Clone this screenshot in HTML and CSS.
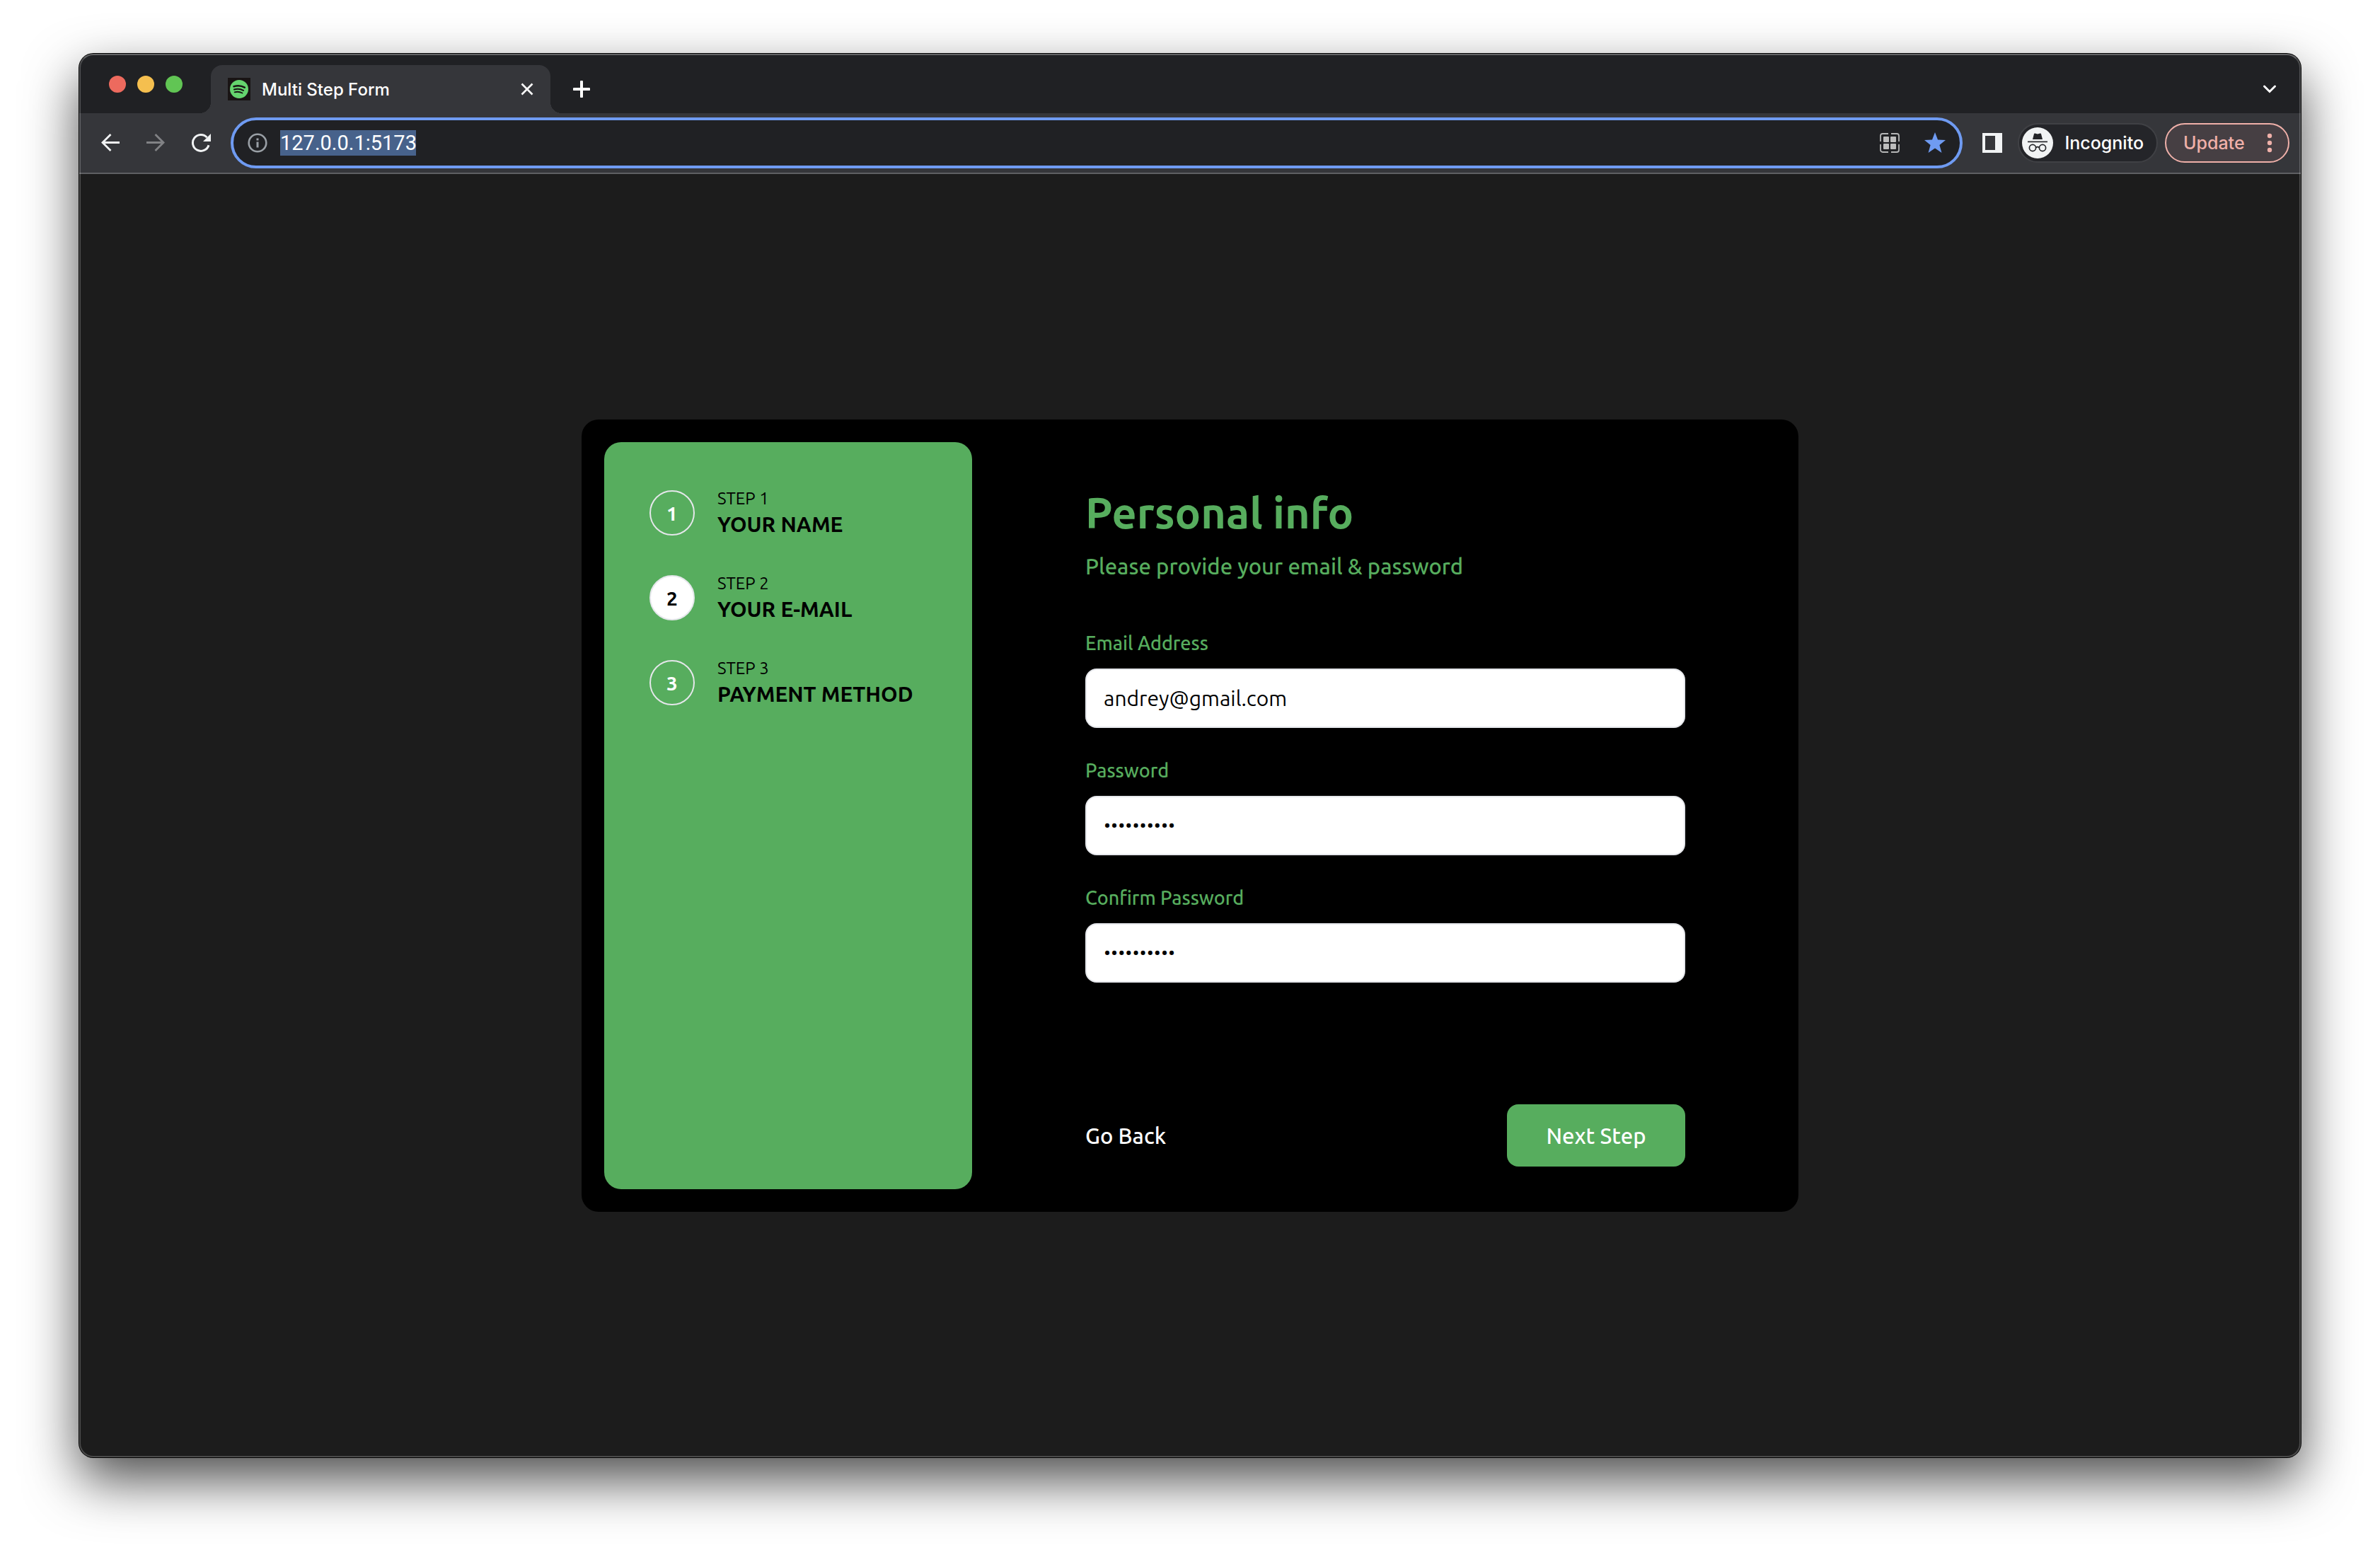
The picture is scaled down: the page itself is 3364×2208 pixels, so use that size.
FILE: index.html
```html
<!DOCTYPE html>
<html lang="en">
<head>
<meta charset="utf-8">
<title>Multi Step Form</title>
<link rel="stylesheet" href="styles.css">
</head>
<body>
<div class="window">
  <header class="tabstrip">
    <div class="lights">
      <button class="light light-close" type="button" aria-label="Close window"></button>
      <button class="light light-min" type="button" aria-label="Minimise window"></button>
      <button class="light light-max" type="button" aria-label="Zoom window"></button>
    </div>
    <div class="tab">
      <svg class="favicon" viewBox="0 0 32 32" aria-hidden="true">
        <rect width="32" height="32" fill="#191414"/>
        <circle cx="16" cy="16" r="13" fill="#65d46e"/>
        <g fill="none" stroke="#191414" stroke-linecap="round">
          <path d="M8.5 12.2c5-1.5 11-1 15.300 1.400" stroke-width="2.500"/>
          <path d="M9 16.400c4.500-1.200 9.300-.7 13 1.400" stroke-width="2.100"/>
          <path d="M9.600 20.300c3.800-1 7.700-.5 10.900 1.200" stroke-width="1.800"/>
        </g>
      </svg>
      <span class="tab-title">Multi Step Form</span>
      <button class="icon-btn" type="button" aria-label="Close tab">
        <svg width="18" height="18" viewBox="0 0 18 18"><path d="M1.500 1.500l15 15M16.500 1.500l-15 15" stroke="#fff" stroke-width="2.600"/></svg>
      </button>
    </div>
    <button class="icon-btn new-tab" type="button" aria-label="New tab">
      <svg width="24" height="24" viewBox="0 0 24 24"><path d="M12 1.500v21M1.500 12h21" stroke="#fff" stroke-width="4" stroke-linecap="round"/></svg>
    </button>
    <button class="icon-btn tab-search" type="button" aria-label="Search tabs">
      <svg width="20" height="14" viewBox="0 0 20 14"><path d="M2.500 3L10 10.500 17.500 3" fill="none" stroke="#fff" stroke-width="3" stroke-linecap="round"/></svg>
    </button>
  </header>

  <nav class="toolbar" aria-label="Browser">
    <div class="nav-buttons">
      <button class="icon-btn" type="button" aria-label="Back">
        <svg width="28" height="28" viewBox="0 0 28 28"><path d="M27 13.500H3M14.500 2L3 13.500 14.500 25" fill="none" stroke="#f1f3f4" stroke-width="2.800"/></svg>
      </button>
      <button class="icon-btn" type="button" aria-label="Forward">
        <svg width="28" height="28" viewBox="0 0 28 28"><path d="M1 13.500h24M13.500 2L25 13.500 13.500 25" fill="none" stroke="#818285" stroke-width="2.800"/></svg>
      </button>
      <button class="icon-btn" type="button" aria-label="Reload">
        <svg width="28" height="28" viewBox="0 0 28 28"><path d="M22.500 6.200A11.500 11.500 0 1 0 25 17.200" fill="none" stroke="#f1f3f4" stroke-width="3"/><path d="M28 1v11H17z" fill="#f1f3f4"/></svg>
      </button>
    </div>
    <div class="omnibox">
      <svg width="28" height="28" viewBox="0 0 28 28" aria-hidden="true"><circle cx="14" cy="14" r="12.300" fill="none" stroke="#9aa0a6" stroke-width="2.600"/><path d="M12.500 7.500h3v3h-3zM12.500 12.500h3v8h-3z" fill="#9aa0a6"/></svg>
      <input class="url" type="text" value="127.0.0.1:5173" aria-label="Address">
      <div class="omnibox-actions">
        <button class="icon-btn" type="button" aria-label="QR code">
          <svg width="28" height="28" viewBox="0 0 28 28"><g fill="#bdbdbd"><rect x="5" y="5" width="8" height="8" rx="1"/><rect x="15" y="5" width="8" height="8" rx="1"/><rect x="5" y="15" width="8" height="8" rx="1"/><rect x="15" y="15" width="8" height="8" rx="1"/></g><path d="M1 12V4a3 3 0 0 1 3-3h8M16 1h8a3 3 0 0 1 3 3v8M27 16v8a3 3 0 0 1-3 3h-8M12 27H4a3 3 0 0 1-3-3v-8" fill="none" stroke="#b4b5b6" stroke-width="1.800"/></svg>
        </button>
        <button class="icon-btn" type="button" aria-label="Bookmark">
          <svg width="30" height="30" viewBox="0 0 30 30"><path d="M15 0l4 10.500 11 .5-8.600 7L24.500 29 15 22.600 5.500 29l3.100-11L0 11l11-.5z" fill="#6f9bf2"/></svg>
        </button>
      </div>
    </div>
    <button class="icon-btn" type="button" aria-label="Side panel">
      <svg width="28" height="28" viewBox="0 0 28 28"><path d="M0 0h28v28H0zM4 4v20h14V4z" fill="#f1f3f4" fill-rule="evenodd"/></svg>
    </button>
    <div class="profile">
      <svg width="44" height="44" viewBox="0 0 44 44" aria-hidden="true">
        <circle cx="22" cy="22" r="22" fill="#f1f3f4"/>
        <path d="M17 9.300q.3-1 1.300-.8l3.700.9 3.700-.9q1-.2 1.300.8L29 17H15z" fill="#242529"/>
        <path d="M8 20.400h28" stroke="#242529" stroke-width="1.700"/>
        <g fill="none" stroke="#242529" stroke-width="1.700"><circle cx="15" cy="29" r="4.600"/><circle cx="29" cy="29" r="4.600"/><path d="M19.600 28.500q2.400-1.600 4.800 0"/></g>
      </svg>
      <span>Incognito</span>
    </div>
    <button class="update" type="button">
      <span>Update</span>
      <svg width="8" height="28" viewBox="0 0 8 28" aria-hidden="true"><g fill="#efb0a9"><circle cx="4" cy="4" r="3.200"/><circle cx="4" cy="14" r="3.200"/><circle cx="4" cy="24" r="3.200"/></g></svg>
    </button>
  </nav>

  <main class="page">
    <section class="card">
      <ol class="steps">
        <li class="step">
          <span class="step-num">1</span>
          <span class="step-text"><span class="step-label">STEP 1</span><strong class="step-name">YOUR NAME</strong></span>
        </li>
        <li class="step" aria-current="step">
          <span class="step-num step-num-active">2</span>
          <span class="step-text"><span class="step-label">STEP 2</span><strong class="step-name">YOUR E-MAIL</strong></span>
        </li>
        <li class="step">
          <span class="step-num">3</span>
          <span class="step-text"><span class="step-label">STEP 3</span><strong class="step-name">PAYMENT METHOD</strong></span>
        </li>
      </ol>
      <form class="form">
        <h1 class="title">Personal info</h1>
        <p class="subtitle">Please provide your email &amp; password</p>
        <div class="fields">
          <div class="field">
            <label for="email">Email Address</label>
            <input id="email" type="email" value="andrey@gmail.com">
          </div>
          <div class="field">
            <label for="password">Password</label>
            <input id="password" class="secret" type="password" value="qwerty1234">
          </div>
          <div class="field">
            <label for="confirm">Confirm Password</label>
            <input id="confirm" class="secret" type="password" value="qwerty1234">
          </div>
        </div>
        <div class="actions">
          <button class="back" type="button">Go Back</button>
          <button class="next" type="submit">Next Step</button>
        </div>
      </form>
    </section>
  </main>
</div>
</body>
</html>
```
FILE: styles.css
```css
:root {
  --green: #57ad5e;
  --strip: #202124;
  --bar: #35363a;
  --page: #1c1c1c;
  --ui: Inter, "Liberation Sans", sans-serif;
  --form: Ubuntu, Lato, "Noto Sans", sans-serif;
}

* { box-sizing: border-box; }

body {
  margin: 0;
  min-height: 100vh;
  padding: 76px 112px 148px;
  display: flex;
  background: #fff;
  font-family: var(--ui);
}

button, input { font: inherit; color: inherit; margin: 0; }
button { border: 0; padding: 0; background: none; cursor: pointer; }
svg { display: block; flex: none; }

.window {
  position: relative;
  flex: 1;
  display: flex;
  flex-direction: column;
  border-radius: 20px;
  background: var(--page);
  box-shadow: 0 0 0 1px #000, 0 32px 76px rgba(0, 0, 0, .7);
}

/* light rim drawn over the window's edge */
.window::after {
  content: "";
  position: absolute;
  inset: 0;
  border: 2px solid rgba(255, 255, 255, .2);
  border-top-color: rgba(255, 255, 255, .3);
  border-radius: 20px;
  pointer-events: none;
}

/* tab strip */
.tabstrip {
  height: 84px;
  display: flex;
  align-items: flex-end;
  padding: 2px 34px 0 42px;
  background: var(--strip);
  border-radius: 20px 20px 0 0;
}

.lights { display: flex; gap: 16px; align-self: center; margin-right: 40px; }
.light { width: 24px; height: 24px; border-radius: 50%; }
.light-close { background: #ed6a5e; }
.light-min { background: #f5bf4f; }
.light-max { background: #61c554; }

.tab {
  position: relative;
  width: 480px;
  height: 68px;
  display: flex;
  align-items: center;
  gap: 16px;
  padding: 0 24px;
  background: var(--bar);
  border-radius: 16px 16px 0 0;
  color: #fff;
  font-size: 24px;
  font-weight: 500;
}

.tab::before, .tab::after {
  content: "";
  position: absolute;
  bottom: 0;
  width: 16px;
  height: 16px;
}
.tab::before { right: 100%; background: radial-gradient(circle at 0 0, transparent 16px, var(--bar) 16px); }
.tab::after { left: 100%; background: radial-gradient(circle at 100% 0, transparent 16px, var(--bar) 16px); }

.favicon { width: 32px; height: 32px; }
.tab-title { flex: 1; }
.new-tab, .tab-search { height: 68px; }
.new-tab { margin-left: 32px; }
.tab-search { margin-left: auto; }

/* toolbar */
.toolbar {
  height: 86px;
  display: flex;
  align-items: center;
  padding: 0 16px 0 30px;
  background: var(--bar);
  border-bottom: 2px solid #5f6063;
  color: #fff;
  font-size: 25px;
  font-weight: 500;
}

.nav-buttons { display: flex; gap: 36px; margin-right: 28px; }

.omnibox {
  flex: 1;
  height: 72px;
  display: flex;
  align-items: center;
  gap: 18px;
  padding: 0 20px;
  margin-right: 28px;
  border: 4px solid #6f9bf2;
  border-radius: 36px;
  background: var(--strip);
}

.url {
  width: 192px;
  height: 36px;
  border: 0;
  padding: 0;
  outline: 0;
  background: #47628b;
  font-family: Roboto, var(--ui);
  font-size: 29px;
  font-weight: 400;
  line-height: 36px;
}

.omnibox-actions { display: flex; align-items: center; gap: 35px; margin-left: auto; }

.profile {
  height: 56px;
  display: flex;
  align-items: center;
  gap: 16px;
  padding: 0 18px 0 4px;
  margin: 0 10px 0 22px;
  border: 2px solid #404145;
  border-radius: 28px;
  background: #242529;
}

.update {
  width: 176px;
  height: 56px;
  display: flex;
  align-items: center;
  justify-content: space-between;
  padding: 0 22px 0 24px;
  border: 2px solid #efb0a9;
  border-radius: 28px;
  background: #463f43;
  color: #efb0a9;
}

/* page */
.page {
  flex: 1;
  display: flex;
  align-items: center;
  justify-content: center;
  font-family: var(--form);
}

.card {
  width: 100%;
  max-width: 1720px;
  min-height: 1120px;
  display: grid;
  grid-template-columns: 520px 1fr;
  padding: 32px;
  border-radius: 24px;
  background: #000;
}

.steps {
  display: flex;
  flex-direction: column;
  gap: 52px;
  margin: 0;
  padding: 66px 64px;
  list-style: none;
  border-radius: 24px;
  background: var(--green);
}

.step { display: flex; align-items: center; gap: 32px; }

.step-num {
  width: 64px;
  height: 64px;
  display: grid;
  place-items: center;
  border: 2px solid #e5e7eb;
  border-radius: 50%;
  color: #fff;
  font-size: 28px;
  font-weight: 700;
}
.step-num-active { background: #fff; color: #000; }

.step-text { display: flex; flex-direction: column; gap: 4px; white-space: nowrap; }
.step-label { font-size: 24px; line-height: 28px; }
.step-name { font-size: 30px; line-height: 36px; font-weight: 700; }

.form {
  display: flex;
  flex-direction: column;
  padding: 60px 128px 32px 160px;
  color: var(--green);
}

.title { margin: 0; font-size: 61px; line-height: 80px; font-weight: 700; }
.subtitle { margin: 12px 0 64px; font-size: 31px; line-height: 48px; font-weight: 500; }

.fields { display: flex; flex-direction: column; gap: 40px; }
.field { display: flex; flex-direction: column; gap: 16px; }
.field label { font-size: 27px; line-height: 40px; font-weight: 500; }
.field input {
  width: 100%;
  height: 84px;
  padding: 0 24px;
  border: 2px solid #e5e7eb;
  border-radius: 16px;
  background: #fff;
  color: #000;
  font-size: 30px;
}
.field .secret { font-family: Roboto, var(--ui); }

.actions {
  display: flex;
  align-items: center;
  justify-content: space-between;
  margin-top: auto;
  color: #fff;
  font-size: 31px;
  font-weight: 500;
}
.next { width: 252px; height: 88px; border-radius: 16px; background: var(--green); }
```
